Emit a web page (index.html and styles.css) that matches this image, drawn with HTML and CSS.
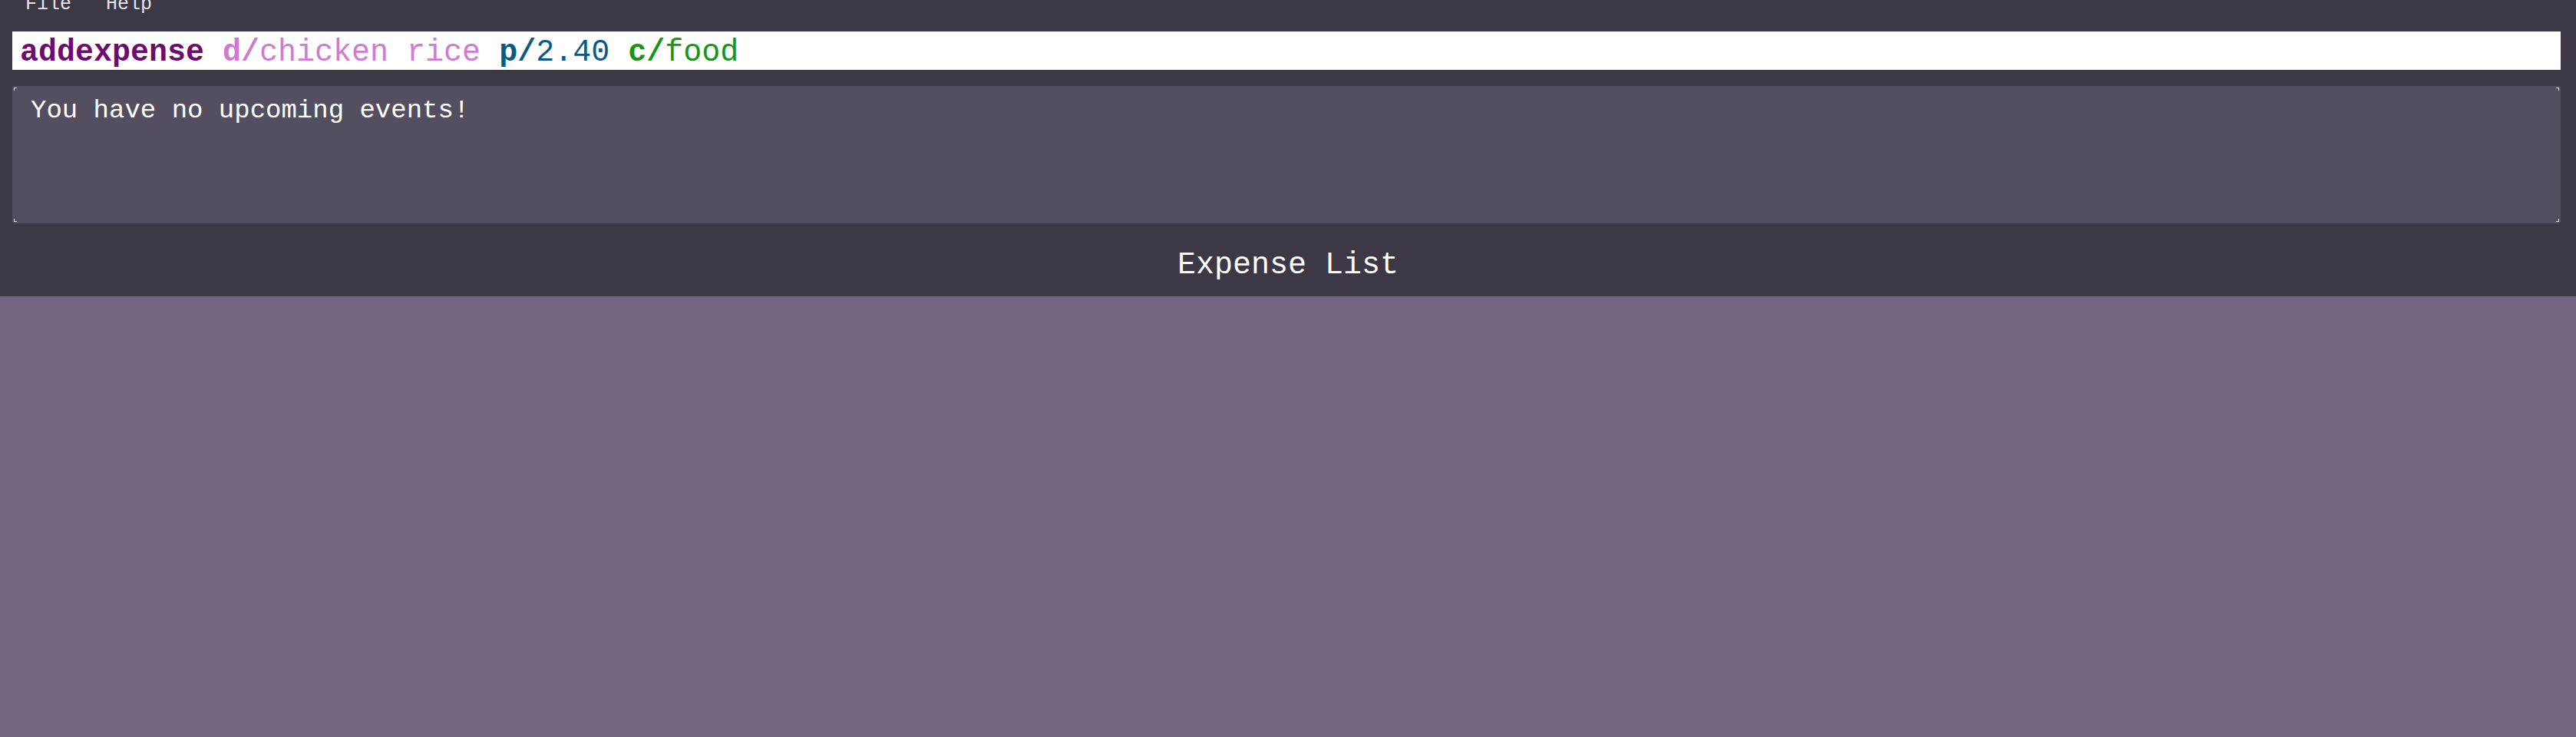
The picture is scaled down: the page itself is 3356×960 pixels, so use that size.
FILE: index.html
```html
<!DOCTYPE html>
<html>
<head>
<meta charset="utf-8">
<link rel="stylesheet" href="styles.css">
</head>
<body>
<div class="app">
  <div class="menubar">
    <span class="menu-item">File</span>
    <span class="menu-item">Help</span>
  </div>
  <div class="command-pane">
    <div class="command-box"><span class="cmd">addexpense</span> <span class="pfx-d">d/</span><span class="val-d">chicken rice</span> <span class="pfx-p">p/</span><span class="val-p">2.40</span> <span class="pfx-c">c/</span><span class="val-c">food</span></div>
  </div>
  <div class="result-pane">
    <div class="result-box">
      <span class="corner tl"></span>
      <span class="corner tr"></span>
      <span class="corner bl"></span>
      <span class="corner br"></span>
      <div class="result-text">You have no upcoming events!</div>
    </div>
  </div>
  <div class="list-header">Expense List</div>
  <div class="list-area"></div>
</div>
</body>
</html>
```
FILE: styles.css
```css
html, body {
  margin: 0;
  padding: 0;
  height: 100%;
}
body {
  background: #3c3846;
  font-family: "Courier New", "Nimbus Mono PS", "Nimbus Mono L", "FreeMono", "Liberation Mono", monospace;
  overflow: hidden;
}
.app {
  display: flex;
  flex-direction: column;
  height: 960px;
}
.menubar {
  height: 41px;
  flex: none;
  display: flex;
  gap: 45px;
  padding-left: 33px;
  overflow: hidden;
  box-sizing: border-box;
}
.menu-item {
  font-size: 25px;
  line-height: 25px;
  margin-top: -7px;
  color: #e6e3ea;
  height: 25px;
}
.command-pane {
  padding: 0 20px 0 16px;
  flex: none;
}
.command-box {
  background: #ffffff;
  height: 50px;
  box-sizing: border-box;
  padding: 5px 10px 0 10px;
  font-size: 40px;
  line-height: 46px;
  white-space: pre;
  overflow: hidden;
}
.cmd { color: #6e0b70; font-weight: bold; }
.pfx-d { color: #d07ad2; font-weight: bold; }
.val-d { color: #d07ad2; }
.pfx-p { color: #0b5a86; font-weight: bold; }
.val-p { color: #0b5a86; }
.pfx-c { color: #169616; font-weight: bold; }
.val-c { color: #169616; }
.result-pane {
  padding: 21px 20px 0 16px;
  flex: none;
}
.result-box {
  position: relative;
  background: #544f60;
  height: 179px;
  border-radius: 3px;
  box-sizing: border-box;
  padding: 12px 24px 0 24px;
}
.result-text {
  color: #ffffff;
  font-size: 34px;
  line-height: 40px;
  white-space: pre;
}
.corner {
  position: absolute;
  width: 3px;
  height: 3px;
  border-color: #e8e6ec;
  border-style: solid;
  border-width: 0;
}
.corner.tl { top: 2px; left: 2px; border-top-width: 1px; border-left-width: 1px; }
.corner.tr { top: 2px; right: 2px; border-top-width: 1px; border-right-width: 1px; }
.corner.bl { bottom: 2px; left: 2px; border-bottom-width: 1px; border-left-width: 1px; }
.corner.br { bottom: 2px; right: 2px; border-bottom-width: 1px; border-right-width: 1px; }
.list-header {
  flex: none;
  height: 95px;
  box-sizing: border-box;
  padding-top: 35px;
  text-align: center;
  color: #ffffff;
  font-size: 40px;
  line-height: 40px;
}
.list-area {
  flex: 1;
  background: #736580;
}
```
